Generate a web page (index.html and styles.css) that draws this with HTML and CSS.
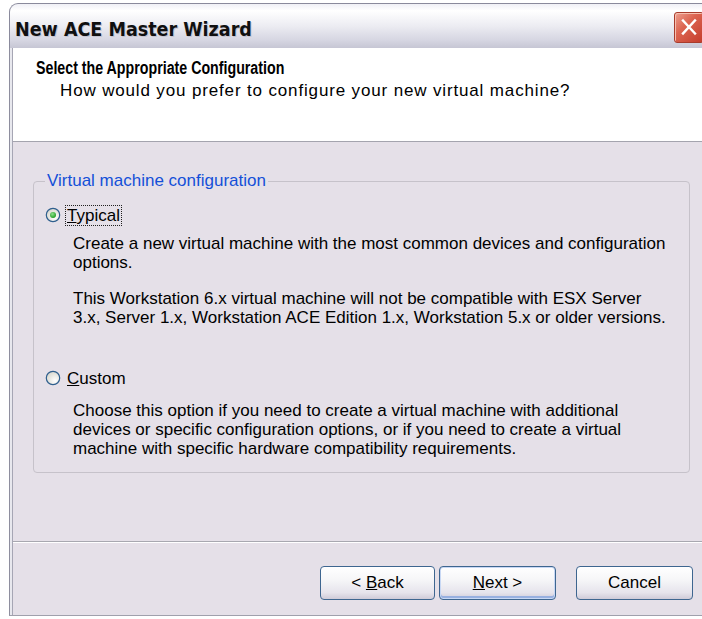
FILE: index.html
```html
<!DOCTYPE html>
<html lang="en">
<head>
<meta charset="utf-8">
<title>New ACE Master Wizard</title>
<link rel="stylesheet" href="styles.css">
</head>
<body>
<div class="window">
  <div class="titlebar">
    <span class="title">New ACE Master Wizard</span>
    <span class="close" aria-label="Close">
      <svg width="28" height="28" viewBox="0 0 28 28">
        <path d="M8 7.5 L20 20.5 M20 7.5 L8 20.5" stroke="#fff" stroke-width="2.4" stroke-linecap="square"/>
      </svg>
    </span>
  </div>
  <div class="frame">
    <div class="header">
      <div class="heading"><span class="heading-text">Select the Appropriate Configuration</span></div>
      <div class="subheading">How would you prefer to configure your new virtual machine?</div>
    </div>
    <div class="content">
      <fieldset class="group">
        <legend>Virtual machine configuration</legend>
        <div class="option">
          <div class="option-row">
            <svg class="radio" width="16" height="16" viewBox="0 0 16 16">
              <defs>
                <radialGradient id="rf" cx="0.65" cy="0.7" r="0.7">
                  <stop offset="0" stop-color="#ffffff"/>
                  <stop offset="1" stop-color="#d9d9d0"/>
                </radialGradient>
                <radialGradient id="dot" cx="0.4" cy="0.35" r="0.7">
                  <stop offset="0" stop-color="#8ee08e"/>
                  <stop offset="1" stop-color="#1b9a1b"/>
                </radialGradient>
              </defs>
              <circle cx="8" cy="8" r="6.7" fill="url(#rf)" stroke="#2f5f8e" stroke-width="1.2"/>
              <circle cx="8" cy="8" r="3" fill="url(#dot)"/>
            </svg>
            <span class="label focused"><u>T</u>ypical</span>
          </div>
          <p class="desc">Create a new virtual machine with the most common devices and configuration<br>options.</p>
          <p class="desc">This Workstation 6.x virtual machine will not be compatible with ESX Server<br>3.x, Server 1.x, Workstation ACE Edition 1.x, Workstation 5.x or older versions.</p>
        </div>
        <div class="option">
          <div class="option-row">
            <svg class="radio" width="16" height="16" viewBox="0 0 16 16">
              <defs>
                <radialGradient id="rf2" cx="0.65" cy="0.7" r="0.7">
                  <stop offset="0" stop-color="#ffffff"/>
                  <stop offset="1" stop-color="#d9d9d0"/>
                </radialGradient>
              </defs>
              <circle cx="8" cy="8" r="6.7" fill="url(#rf2)" stroke="#2f5f8e" stroke-width="1.2"/>
            </svg>
            <span class="label"><u>C</u>ustom</span>
          </div>
          <p class="desc">Choose this option if you need to create a virtual machine with additional<br>devices or specific configuration options, or if you need to create a virtual<br>machine with specific hardware compatibility requirements.</p>
        </div>
      </fieldset>
    </div>
    <div class="footer">
      <div class="buttons">
        <button class="btn">&lt; <u>B</u>ack</button>
        <button class="btn default"><u>N</u>ext &gt;</button>
        <button class="btn cancel">Cancel</button>
      </div>
    </div>
  </div>
</div>
</body>
</html>
```
FILE: styles.css
```css
html, body {
  margin: 0;
  padding: 0;
  background: #ffffff;
  overflow: hidden;
  width: 702px;
  height: 619px;
}

body {
  font-family: "Liberation Sans", Arial, sans-serif;
  color: #000;
}

.window {
  margin: 3px 0 0 9px;
  width: 720px;
}

/* Silver title bar */
.titlebar {
  height: 44px;
  border: 1px solid #8a8a9c;
  border-right: none;
  border-bottom: none;
  border-top-left-radius: 9px;
  background: linear-gradient(#f0f0f6 0%, #ffffff 15%, #ececf2 50%, #d6d6e2 82%, #c6c6d4 100%);
  display: flex;
  align-items: center;
  position: relative;
}

.title {
  font-family: "DejaVu Sans Condensed", "Liberation Sans", sans-serif;
  font-weight: bold;
  font-size: 19.5px;
  color: #101010;
  margin-left: 5px;
  margin-top: 6px;
  text-shadow: 1px 1px 0 #c4c4d0;
}

.close {
  position: absolute;
  left: 664px;
  top: 8px;
  width: 28px;
  height: 29px;
  border: 1px solid #a83c2c;
  border-radius: 3px;
  background: linear-gradient(135deg, #eca090 0%, #dc6450 40%, #c43c2c 100%);
  box-shadow: inset 1px 1px 0 #f6c0b0;
}

.close svg {
  display: block;
}

/* Window body with double left border */
.frame {
  border-left: 1px solid #8e8e9e;
  box-shadow: inset 1px 0 0 #e8e8ee, inset 2px 0 0 #e8e8ee, inset 3px 0 0 #a6a6b4;
  border-bottom: 1px solid #a0a0ac;
  padding-left: 3px;
}

.header {
  background: #ffffff;
  height: 94px;
  border-bottom: 1px solid #a4a4ae;
  box-sizing: border-box;
  padding-top: 10px;
  padding-left: 23px;
}

.heading {
  line-height: 20px;
  height: 20px;
}

/* Narrow bold face for the page heading */
.heading-text {
  display: inline-block;
  font-family: "Liberation Sans", Arial, sans-serif;
  font-weight: bold;
  font-size: 18px;
  white-space: nowrap;
  transform: scaleX(0.79);
  transform-origin: left center;
}

.subheading {
  font-size: 17px;
  letter-spacing: 0.85px;
  line-height: 20px;
  margin-top: 3px;
  padding-left: 24px;
}

.content {
  background: #e5e0e8;
  height: 400px;
  box-sizing: border-box;
  padding-top: 30px;
  padding-left: 20px;
  border-bottom: 1px solid #a8a8b0;
}

.group {
  margin: 0;
  width: 657px;
  height: 301px;
  box-sizing: border-box;
  border: 1px solid #c6c2ca;
  border-radius: 4px;
  padding: 14px 0 0 11px;
}

.group legend {
  color: #1450d8;
  font-size: 17px;
  padding: 0 2px;
  margin-left: 0;
  line-height: 18px;
}

.option-row {
  display: flex;
  align-items: center;
  height: 22px;
}

.radio {
  display: block;
  margin-right: 4px;
}

.label {
  font-size: 17px;
  line-height: 19px;
  padding: 0 1px;
  border: 1px solid transparent;
}

.label.focused {
  border: 1px dotted #202020;
}

.option {
  margin-bottom: 40px;
}

.desc {
  margin: 8px 0 17px 28px;
  font-size: 17px;
  line-height: 19px;
  white-space: nowrap;
}

.option .desc:last-child {
  margin-bottom: 0;
}

.option:last-child .desc {
  margin-top: 12px;
}

.footer {
  background: #e5e0e8;
  border-top: 1px solid #ffffff;
  height: 73px;
  box-sizing: border-box;
  padding-top: 23px;
}

.buttons {
  display: flex;
  padding-left: 307px;
}

.btn {
  font-family: "Liberation Sans", Arial, sans-serif;
  font-size: 17px;
  height: 34px;
  width: 115px;
  border: 1.5px solid #3e6690;
  border-radius: 4px;
  background: linear-gradient(#ffffff 0%, #f6f6f8 40%, #e6e4ec 80%, #cfcbd8 100%);
  color: #000;
  padding: 0;
}

.btn.default {
  margin-left: 4px;
  width: 117px;
  box-shadow: inset 0 0 0 1px #c8d8f4, inset 0 -2px 0 1px #98b0e0;
}

.btn.cancel {
  margin-left: 20px;
  width: 117px;
}
```
